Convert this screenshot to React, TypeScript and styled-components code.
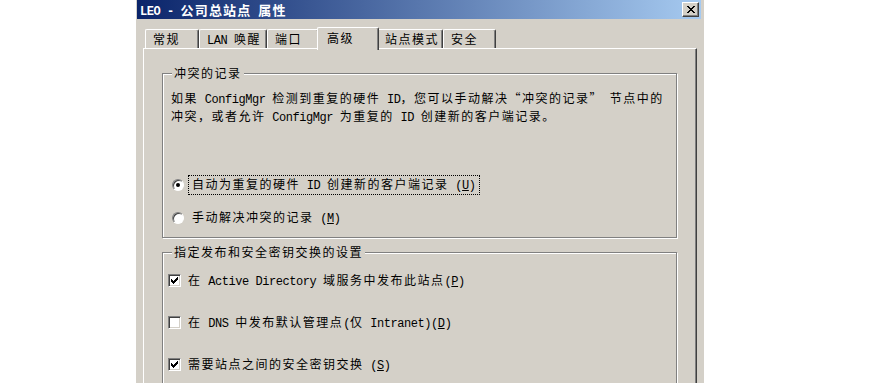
import React from "react";
import styled, { createGlobalStyle } from "styled-components";

const GlobalStyle = createGlobalStyle`
  html, body {
    margin: 0;
    padding: 0;
    background: #fff;
  }
  body {
    font-family: "Noto Sans CJK SC", "Liberation Sans", sans-serif;
    font-size: 12px;
    letter-spacing: 1.5px;
    color: #000;
  }
`;

const Page = styled.div`
  display: flex;
  padding-left: 136px;
  height: 383px;
  overflow: hidden;
`;

const Window = styled.div`
  width: 568px;
  height: 383px;
  background: #d4d0c8;
  display: flex;
  flex-direction: column;
  overflow: hidden;
`;

const TitleBar = styled.div`
  height: 21px;
  margin: 0 3px 0 1px;
  padding: 0 2px 0 3px;
  background: linear-gradient(to right, #0a246a, #a6caf0);
  display: flex;
  align-items: center;
  justify-content: space-between;
  color: #fff;
  font-weight: bold;
  font-size: 13px;
  letter-spacing: 1.2px;
`;

const CloseButton = styled.div`
  box-sizing: border-box;
  width: 17px;
  height: 15px;
  background: #d4d0c8;
  border: 1px solid;
  border-color: #fff #404040 #404040 #fff;
  box-shadow: inset -1px -1px #808080;
  display: flex;
  align-items: center;
  justify-content: center;
`;

const Body = styled.div`
  flex: 1;
  display: flex;
  flex-direction: column;
  padding: 0 7px;
`;

const TabStrip = styled.div`
  display: flex;
  align-items: flex-end;
  height: 21px;
  margin-top: 8px;
  padding-left: 2px;
`;

const Tab = styled.div<{ $width: number; $active?: boolean }>`
  box-sizing: border-box;
  position: relative;
  z-index: ${(p) => (p.$active ? 1 : 0)};
  width: ${(p) => p.$width + (p.$active ? 4 : 0)}px;
  height: ${(p) => (p.$active ? 23 : 19)}px;
  margin: ${(p) => (p.$active ? "0 -2px -2px" : "0")};
  padding: ${(p) => (p.$active ? "3px 0 0 9px" : "2px 0 0 7px")};
  background: #d4d0c8;
  border-top: 1px solid #fff;
  border-left: 1px solid #fff;
  border-right: 1px solid #404040;
  border-radius: 2px 2px 0 0;
  box-shadow: inset -1px 0 #808080;
  line-height: 14px;
  white-space: nowrap;
`;

const Panel = styled.div`
  flex: 1;
  border-top: 1px solid #fff;
  border-left: 1px solid #fff;
  border-right: 1px solid #404040;
  box-shadow: inset -1px 0 #808080;
  padding: 17px 19px 0 18px;
`;

const Group = styled.fieldset<{ $pad: string }>`
  margin: 0;
  min-width: 0;
  padding: ${(p) => p.$pad};
  border: 1px solid #808080;
  box-shadow: inset 1px 1px #fff, 1px 1px #fff;
  & + & {
    margin-top: 7px;
  }
`;

const Legend = styled.legend`
  padding: 0 2px;
  margin-left: 1px;
  line-height: 14px;
  background: #d4d0c8;
  white-space: nowrap;
`;

const Desc = styled.p`
  margin: 0;
  line-height: 15px;
  white-space: nowrap;
`;

const OptionList = styled.div<{ $top: number; $gap: number }>`
  display: flex;
  flex-direction: column;
  gap: ${(p) => p.$gap}px;
  margin-top: ${(p) => p.$top}px;
`;

const Row = styled.div`
  display: flex;
  align-items: center;
  height: 18px;
  white-space: nowrap;
`;

const Radio = styled.span<{ $checked?: boolean }>`
  box-sizing: border-box;
  width: 12px;
  height: 12px;
  margin-left: 1px;
  border-radius: 50%;
  border: 1px solid;
  border-color: #808080 #fff #fff #808080;
  box-shadow: inset 1px 1px #404040;
  background: #fff;
  display: flex;
  align-items: center;
  justify-content: center;
  &::after {
    content: "";
    display: ${(p) => (p.$checked ? "block" : "none")};
    width: 4px;
    height: 4px;
    border-radius: 50%;
    background: #000;
  }
`;

const RadioText = styled.span<{ $focused?: boolean }>`
  margin-left: 4px;
  padding: 0 3px;
  line-height: 16px;
  border: 1px dotted ${(p) => (p.$focused ? "#000" : "transparent")};
`;

const CheckBox = styled.span`
  box-sizing: border-box;
  width: 13px;
  height: 13px;
  margin-left: -3px;
  margin-right: 7px;
  border: 1px solid;
  border-color: #808080 #fff #fff #808080;
  box-shadow: inset 1px 1px #404040, inset -1px -1px #d4d0c8;
  background: #fff;
  display: flex;
  align-items: center;
  justify-content: center;
`;

const Latin = styled.span`
  font-family: "Liberation Mono", "DejaVu Sans Mono", monospace;
  font-size: 12px;
  letter-spacing: -0.45px;
`;

function Mixed({ text }: { text: string }) {
  const parts = text.split(/([\x20-\x7e]+)/);
  return (
    <>
      {parts.map((p, i) =>
        p === "" ? null : /^[\x20-\x7e]+$/.test(p) ? (
          <Latin key={i}>{p}</Latin>
        ) : (
          <span key={i}>{p}</span>
        )
      )}
    </>
  );
}

function Accel({ k }: { k: string }) {
  return (
    <Latin>
      (<u>{k}</u>)
    </Latin>
  );
}

function CloseGlyph() {
  return (
    <svg width="8" height="7" viewBox="0 0 8 7" shapeRendering="crispEdges">
      <path
        fill="#000"
        d="M0 0h2v1H0z M6 0h2v1H6z M1 1h2v1H1z M5 1h2v1H5z M2 2h4v1H2z M3 3h2v1H3z M2 4h4v1H2z M1 5h2v1H1z M5 5h2v1H5z M0 6h2v1H0z M6 6h2v1H6z"
      />
    </svg>
  );
}

function CheckMark() {
  return (
    <svg width="7" height="7" viewBox="0 0 7 7" shapeRendering="crispEdges">
      <path
        fill="#000"
        d="M6 0h1v3h-1z M5 1h1v3h-1z M4 2h1v3h-1z M3 3h1v3h-1z M2 4h1v3h-1z M1 3h1v3h-1z M0 2h1v3h-1z"
      />
    </svg>
  );
}

const tabs = [
  { label: "常规", width: 54 },
  { label: "LAN 唤醒", width: 68 },
  { label: "端口", width: 52 },
  { label: "高级", width: 58, active: true },
  { label: "站点模式", width: 66 },
  { label: "安全", width: 53 },
];

const checks = [
  { text: "在 Active Directory 域服务中发布此站点", key: "P", checked: true },
  { text: "在 DNS 中发布默认管理点(仅 Intranet)", key: "D", checked: false },
  { text: "需要站点之间的安全密钥交换 ", key: "S", checked: true },
];

export default function App() {
  return (
    <Page>
      <GlobalStyle />
      <Window>
        <TitleBar>
          <span>
            <Mixed text="LEO - 公司总站点 属性" />
          </span>
          <CloseButton>
            <CloseGlyph />
          </CloseButton>
        </TitleBar>
        <Body>
          <TabStrip>
            {tabs.map((t) => (
              <Tab key={t.label} $width={t.width} $active={t.active}>
                <Mixed text={t.label} />
              </Tab>
            ))}
          </TabStrip>
          <Panel>
            <Group $pad="10px 10px 10px 8px">
              <Legend>冲突的记录</Legend>
              <Desc>
                <Mixed text="如果 ConfigMgr 检测到重复的硬件 ID，您可以手动解决“冲突的记录” 节点中的" />
                <br />
                <Mixed text="冲突，或者允许 ConfigMgr 为重复的 ID 创建新的客户端记录。" />
              </Desc>
              <OptionList $top={50} $gap={15}>
                <Row>
                  <Radio $checked />
                  <RadioText $focused>
                    <Mixed text="自动为重复的硬件 ID 创建新的客户端记录 " />
                    <Accel k="U" />
                  </RadioText>
                </Row>
                <Row>
                  <Radio />
                  <RadioText>
                    <Mixed text="手动解决冲突的记录 " />
                    <Accel k="M" />
                  </RadioText>
                </Row>
              </OptionList>
            </Group>
            <Group $pad="0 10px 10px 8px">
              <Legend>指定发布和安全密钥交换的设置</Legend>
              <OptionList $top={12} $gap={24}>
                {checks.map((c) => (
                  <Row key={c.key}>
                    <CheckBox>{c.checked && <CheckMark />}</CheckBox>
                    <span>
                      <Mixed text={c.text} />
                      <Accel k={c.key} />
                    </span>
                  </Row>
                ))}
              </OptionList>
            </Group>
          </Panel>
        </Body>
      </Window>
    </Page>
  );
}
